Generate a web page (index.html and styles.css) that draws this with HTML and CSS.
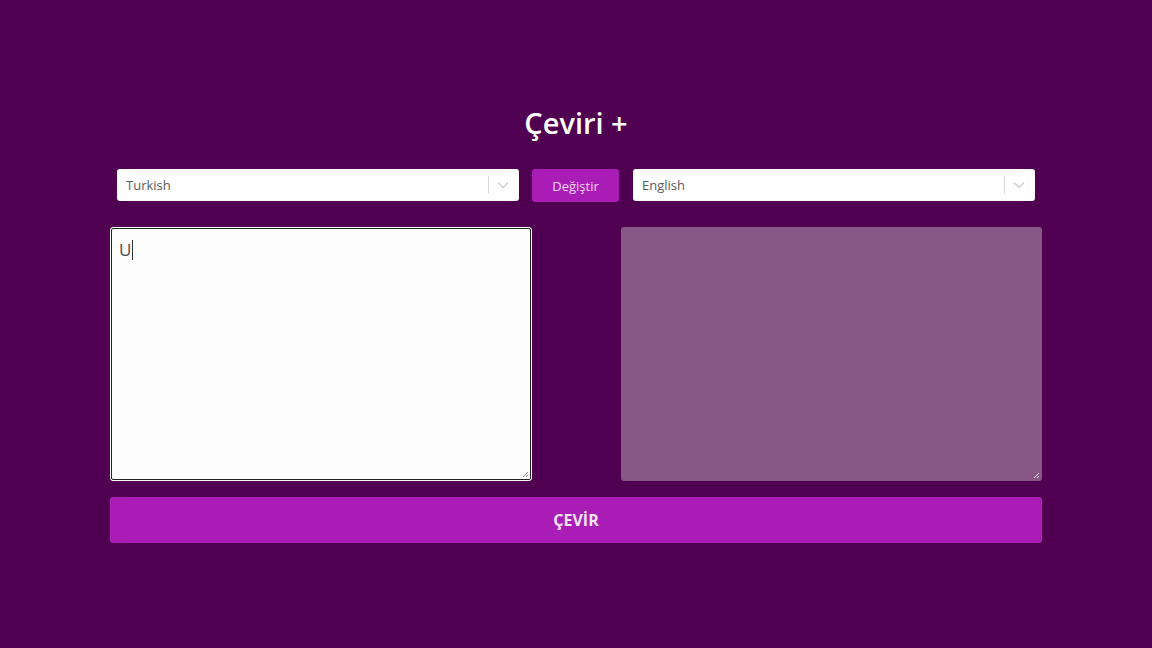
FILE: index.html
```html
<!DOCTYPE html>
<html lang="tr">
<head>
<meta charset="utf-8">
<title>Çeviri +</title>
<link rel="stylesheet" href="styles.css">
</head>
<body>
<main class="app">
  <h1 class="title">Çeviri +</h1>
  <div class="lang-row">
    <div class="select">
      <span class="select-value">Turkish</span>
      <span class="select-sep"></span>
      <svg class="chev" width="12" height="8" viewBox="0 0 12 8"><path d="M1 1.5 6 6.5 11 1.5" fill="none" stroke="#cfcfcf" stroke-width="1.3"/></svg>
    </div>
    <button class="swap">Değiştir</button>
    <div class="select">
      <span class="select-value">English</span>
      <span class="select-sep"></span>
      <svg class="chev" width="12" height="8" viewBox="0 0 12 8"><path d="M1 1.5 6 6.5 11 1.5" fill="none" stroke="#cfcfcf" stroke-width="1.3"/></svg>
    </div>
  </div>
  <div class="text-row">
    <div class="ta-wrap focused">
      <div class="ta">U<span class="caret"></span></div>
      <svg class="grip" width="8" height="8" viewBox="0 0 8 8"><path d="M7 2 2 7M7 5 5 7" stroke="#888" stroke-width="1"/></svg>
    </div>
    <div class="ta-wrap output">
      <div class="ta"></div>
      <svg class="grip" width="8" height="8" viewBox="0 0 8 8"><path d="M7 2 2 7M7 5 5 7" stroke="#ddd" stroke-width="1"/></svg>
    </div>
  </div>
  <button class="translate">ÇEVİR</button>
</main>
</body>
</html>
```
FILE: styles.css
```css
html, body {
  margin: 0;
  padding: 0;
  background: #4f0050;
  height: 100%;
}
body {
  font-family: "Open Sans", "Noto Sans", sans-serif;
}
.app {
  width: 932px;
  margin: 0 auto;
  padding-top: 103px;
  display: flex;
  flex-direction: column;
  align-items: stretch;
}
.title {
  margin: 0;
  text-align: center;
  color: #fff;
  font-size: 29px;
  font-weight: 600;
  line-height: 40px;
}
.lang-row {
  margin-top: 26px;
  display: flex;
  justify-content: center;
  align-items: flex-start;
  gap: 13px;
}
.select {
  width: 402px;
  height: 32px;
  box-sizing: border-box;
  background: #fff;
  border-radius: 3px;
  display: flex;
  align-items: center;
  padding: 0 9px;
  position: relative;
}
.select-value {
  flex: 1;
  font-size: 13px;
  color: #5a5a5a;
}
.select-sep {
  width: 1px;
  height: 18px;
  background: #d9d9d9;
  margin-right: 8px;
}
.chev {
  margin-right: 1px;
}
.swap {
  width: 87px;
  height: 33px;
  margin-right: 1px;
  border: 0;
  border-radius: 3px;
  background: #aa1cb6;
  color: #f0d8f0;
  font-family: inherit;
  font-size: 13px;
  padding: 0;
}
.text-row {
  margin-top: 25px;
  display: flex;
  justify-content: space-between;
}
.ta-wrap {
  width: 422px;
  height: 254px;
  box-sizing: border-box;
  border-radius: 3px;
  position: relative;
}
.ta-wrap.focused {
  background: #fdfdfd;
  border: 1px solid #fff;
  outline: 1px solid #222;
  outline-offset: -2px;
}
.ta-wrap.output {
  width: 421px;
  background: #875785;
}
.ta {
  padding: 10px 8px;
  font-size: 17px;
  color: #4a4a4a;
  line-height: 24px;
  display: flex;
  align-items: center;
}
.caret {
  display: inline-block;
  width: 1px;
  height: 20px;
  background: #333;
  margin-left: 1px;
}
.grip {
  position: absolute;
  right: 2px;
  bottom: 2px;
}
.translate {
  margin-top: 16px;
  height: 46px;
  border: 0;
  border-radius: 3px;
  background: #aa1cb6;
  color: #f3e4f3;
  font-family: inherit;
  font-size: 16px;
  font-weight: 700;
}
```
